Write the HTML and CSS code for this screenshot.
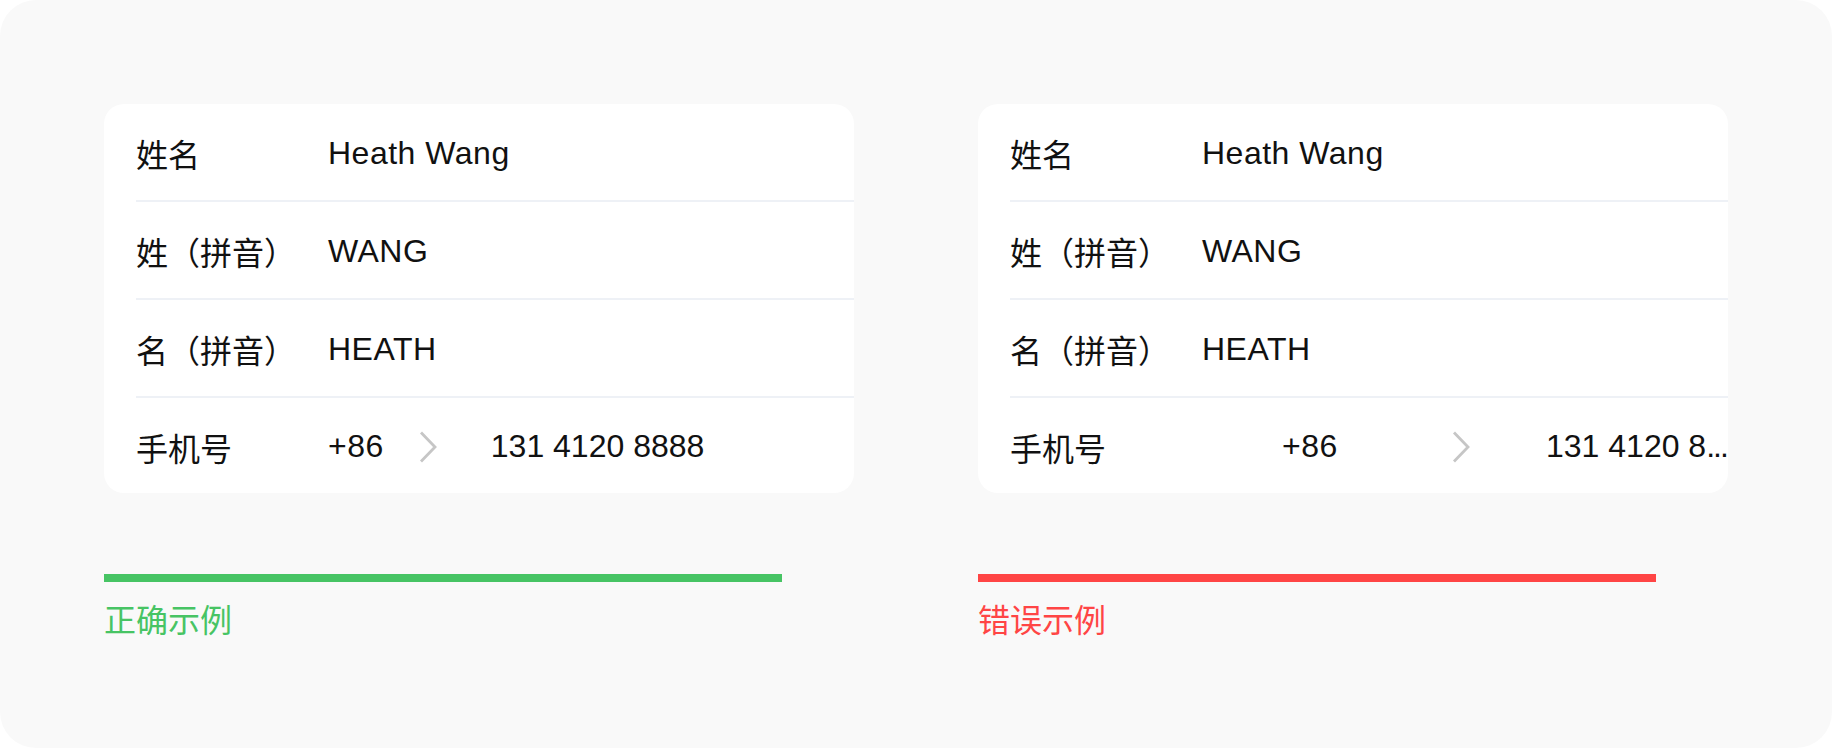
FILE: index.html
```html
<!DOCTYPE html>
<html lang="zh-CN">
<head>
<meta charset="utf-8">
<title>示例</title>
<link rel="stylesheet" href="styles.css">
</head>
<body>
<div class="page">
  <section class="example">
    <div class="card">
      <div class="row"><span class="label">姓名</span><span class="value">Heath Wang</span></div>
      <div class="row"><span class="label">姓（拼音）</span><span class="value">WANG</span></div>
      <div class="row"><span class="label">名（拼音）</span><span class="value">HEATH</span></div>
      <div class="row">
        <span class="label">手机号</span>
        <span class="code">+86</span>
        <svg class="chevron chevron-good" width="18" height="32" viewBox="0 0 18 32"><polyline points="2,1.5 16,16 2,30.5" fill="none" stroke="#c6c6c6" stroke-width="2.8"/></svg>
        <span class="number number-good">131 4120 8888</span>
      </div>
    </div>
    <div class="bar bar-good"></div>
    <div class="caption caption-good">正确示例</div>
  </section>
  <section class="example">
    <div class="card">
      <div class="row"><span class="label">姓名</span><span class="value">Heath Wang</span></div>
      <div class="row"><span class="label">姓（拼音）</span><span class="value">WANG</span></div>
      <div class="row"><span class="label">名（拼音）</span><span class="value">HEATH</span></div>
      <div class="row">
        <span class="label">手机号</span>
        <span class="code code-wide">+86</span>
        <svg class="chevron chevron-bad" width="18" height="32" viewBox="0 0 18 32"><polyline points="2,1.5 16,16 2,30.5" fill="none" stroke="#c6c6c6" stroke-width="2.8"/></svg>
        <span class="number number-bad">131 4120 8<span class="dots">...</span></span>
      </div>
    </div>
    <div class="bar bar-bad"></div>
    <div class="caption caption-bad">错误示例</div>
  </section>
</div>
</body>
</html>
```
FILE: styles.css
```css
html, body {
  margin: 0;
  padding: 0;
  background: #ffffff;
}

.page {
  box-sizing: border-box;
  width: 1832px;
  height: 748px;
  padding: 104px 0 0 104px;
  background: #f9f9f9;
  border-radius: 36px;
  display: flex;
  gap: 124px;
  font-family: "Liberation Sans", "Noto Sans CJK SC", sans-serif;
  color: #111111;
}

.example {
  width: 750px;
  display: flex;
  flex-direction: column;
}

.card {
  background: #ffffff;
  border-radius: 20px;
  overflow: hidden;
}

.row {
  box-sizing: border-box;
  height: 98px;
  padding-top: 2px;
  margin-left: 32px;
  display: flex;
  align-items: center;
  border-bottom: 2px solid #eef1f6;
  font-size: 32px;
  white-space: nowrap;
}

.row:last-child {
  border-bottom: none;
  height: 95px;
}

.label {
  width: 192px;
  flex: none;
}

.value {
  flex: none;
  letter-spacing: 0.5px;
}

.code {
  flex: none;
  letter-spacing: 0.5px;
}

.code-wide {
  width: 216px;
  text-align: center;
}

.chevron {
  flex: none;
  display: block;
}

.chevron-good {
  margin-left: 35px;
}

.chevron-bad {
  margin-left: 34px;
}

.number-good {
  margin-left: 54px;
}

.number-bad {
  margin-left: 76px;
  flex: 1;
  min-width: 0;
  overflow: hidden;
}

.dots {
  letter-spacing: -2px;
}

.bar {
  margin-top: 81px;
  width: 678px;
  height: 8px;
}

.bar-good {
  background: #47c464;
}

.bar-bad {
  background: #ff4545;
}

.caption {
  margin-top: 20px;
  font-family: "Noto Sans CJK SC", sans-serif;
  font-size: 32px;
  line-height: 32px;
}

.caption-good {
  color: #47c464;
}

.caption-bad {
  color: #ff4545;
}
```
